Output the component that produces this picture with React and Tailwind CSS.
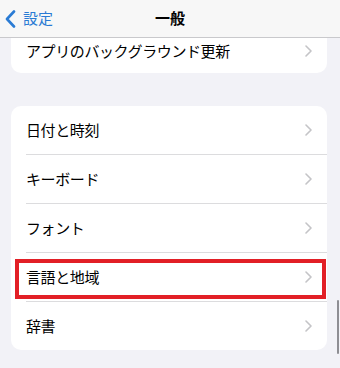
import React from "react";

const FONT = { fontFamily: '"Noto Sans CJK JP", "Noto Sans", sans-serif' };

function Chevron({ className = "" }) {
  return (
    <svg width="7" height="12" viewBox="0 0 7 12" className={className} fill="none">
      <path d="M1 1l5 5-5 5" stroke="#c4c4c7" strokeWidth="1.6" strokeLinecap="round" strokeLinejoin="round" />
    </svg>
  );
}

function Row({ label, last, highlight }) {
  return (
    <div className="relative">
      <div className="flex h-[48px] items-center justify-between pl-[15px] pr-[15px]">
        <span className="text-[15px] tracking-[-0.4px] text-black">{label}</span>
        <Chevron />
      </div>
      {!last && <div className="ml-[15px] h-px bg-[#dcdcde]" />}
      {highlight && (
        <div className="absolute left-[4px] right-[1px] top-[6px] h-[40px] border-[4px] border-[#e21f26]" />
      )}
    </div>
  );
}

export default function App() {
  const items = ["日付と時刻", "キーボード", "フォント", "言語と地域", "辞書"];

  return (
    <div className="relative h-[368px] w-[340px] overflow-hidden bg-[#f2f2f7]" style={FONT}>
      {/* ヘッダー */}
      <div className="relative flex h-[38px] items-center border-b border-[#c9c9cc] bg-[#f7f7f7]">
        <div className="flex items-center pl-[5px]">
          <svg width="11" height="18" viewBox="0 0 11 18" fill="none">
            <path d="M9 1.5L2 9l7 7.5" stroke="#2a7bd4" strokeWidth="2.6" strokeLinecap="round" strokeLinejoin="round" />
          </svg>
          <span className="ml-[7px] text-[15px] text-[#2a7bd4]">設定</span>
        </div>
        <span className="absolute left-1/2 -translate-x-1/2 text-[15px] font-bold text-black">一般</span>
      </div>

      {/* 上のカード */}
      <div className="ml-[11px] mr-[13px] flex h-[35px] items-center justify-between rounded-b-[10px] bg-white pl-[15px] pr-[15px]">
        <span className="-mt-[9px] text-[15px] tracking-[-0.4px] text-black">アプリのバックグラウンド更新</span>
        <Chevron className="-mt-[9px]" />
      </div>

      {/* 一覧 */}
      <div className="ml-[11px] mr-[13px] mt-[33px] rounded-[10px] bg-white">
        {items.map((it, i) => (
          <Row key={it} label={it} last={i === items.length - 1} highlight={it === "言語と地域"} />
        ))}
      </div>

      {/* スクロールバー */}
      <div className="absolute right-[1px] top-[300px] h-[54px] w-[2px] rounded-full bg-[#8e8e93]" />
    </div>
  );
}
